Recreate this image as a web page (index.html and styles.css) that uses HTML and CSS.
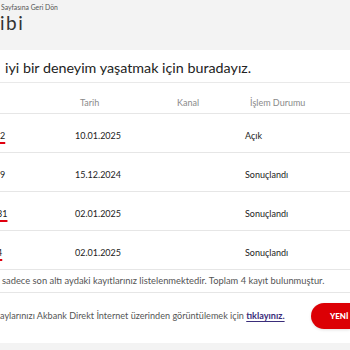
FILE: index.html
```html
<!DOCTYPE html>
<html lang="tr">
<head>
<meta charset="utf-8">
<link rel="stylesheet" href="styles.css">
</head>
<body>
<header class="top">
  <div class="crumb">Sayfasına Geri Dön</div>
  <h1 class="title">ibi</h1>
</header>
<main class="content">
  <p class="subtitle">iyi bir deneyim yaşatmak için buradayız.</p>
  <div class="table">
    <div class="row head">
      <div class="c1"></div>
      <div class="c2">Tarih</div>
      <div class="c3">Kanal</div>
      <div class="c4">İşlem Durumu</div>
    </div>
    <div class="row">
      <div class="c1"><a class="num link">2</a></div>
      <div class="c2">10.01.2025</div>
      <div class="c3"></div>
      <div class="c4">Açık</div>
    </div>
    <div class="row">
      <div class="c1"><span class="num">9</span></div>
      <div class="c2">15.12.2024</div>
      <div class="c3"></div>
      <div class="c4">Sonuçlandı</div>
    </div>
    <div class="row">
      <div class="c1"><a class="num link shift">31</a></div>
      <div class="c2">02.01.2025</div>
      <div class="c3"></div>
      <div class="c4">Sonuçlandı</div>
    </div>
    <div class="row">
      <div class="c1"><a class="num link shift2">4</a></div>
      <div class="c2">02.01.2025</div>
      <div class="c3"></div>
      <div class="c4">Sonuçlandı</div>
    </div>
  </div>
  <p class="note">sadece son altı aydaki kayıtlarınız listelenmektedir. Toplam 4 kayıt bulunmuştur.</p>
  <div class="bottom">
    <p class="more">aylarınızı Akbank Direkt İnternet üzerinden görüntülemek için <a class="click">tıklayınız.</a></p>
    <button class="new">YENİ</button>
  </div>
</main>
<footer class="foot"></footer>
</body>
</html>
```
FILE: styles.css
```css
html, body {
  margin: 0;
  padding: 0;
  overflow: hidden;
  width: 350px;
  height: 350px;
  background: #fff;
  font-family: Lato, "Noto Sans", sans-serif;
  color: #222;
}

.top {
  background: #f3f3f3;
  height: 50px;
  box-sizing: border-box;
  padding-top: 3px;
}

.crumb {
  padding-left: 1px;
  white-space: nowrap;
  font-size: 6.8px;
  line-height: 9px;
  color: #555;
}

.title {
  margin: 0;
  white-space: nowrap;
  font-size: 19px;
  font-weight: 400;
  letter-spacing: 1.5px;
  line-height: 21px;
  color: #333;
}

.subtitle {
  margin: 8px 0 0;
  padding-left: 5px;
  white-space: nowrap;
  font-size: 14.3px;
  line-height: 20px;
  padding-bottom: 4px;
  color: #222;
}

.table {
  border-top: 1px solid #e9e9e9;
}

.row {
  display: grid;
  grid-template-columns: 70px 100px 70px 1fr;
  border-bottom: 1px solid #e6e6e6;
  height: 39px;
  box-sizing: border-box;
  padding-top: 16px;
  font-size: 9px;
  line-height: 12px;
  white-space: nowrap;
  color: #222;
}

.row.head {
  height: 31px;
  padding-top: 14px;
  color: #8a8a8a;
}

.row .c2 { padding-left: 5px; }
.row .c4 { padding-left: 5px; }
.row.head .c2 { padding-left: 10px; }
.row.head .c3 { padding-left: 7px; }
.row.head .c4 { padding-left: 10px; }

.row .c1 {
  overflow: hidden;
}

.num {
  color: #222;
  display: inline-block;
}

.link {
  text-decoration: underline;
  text-decoration-color: #e0000f;
  text-decoration-thickness: 2px;
  text-underline-offset: 3px;
}

.shift {
  margin-left: -3px;
}

.shift2 {
  margin-left: -3px;
}

.note {
  margin: 0;
  height: 23px;
  box-sizing: border-box;
  padding-top: 5px;
  padding-left: 2px;
  white-space: nowrap;
  font-size: 9.35px;
  line-height: 12px;
  color: #555;
  border-bottom: 1px solid #e6e6e6;
}

.bottom {
  display: flex;
  align-items: center;
  height: 50px;
  padding-top: 10px;
  padding-bottom: 14px;
  box-sizing: border-box;
}

.more {
  margin: 0;
  width: 311px;
  flex: none;
  white-space: nowrap;
  font-size: 9.1px;
  line-height: 12px;
  color: #555;
}

.click {
  color: #3a2d7a;
  font-weight: 700;
  text-decoration: underline;
  text-underline-offset: 2px;
}

.new {
  flex: none;
  width: 39px;
  height: 26px;
  border: 0;
  border-radius: 13px 0 0 13px;
  background: #dc0005;
  color: #fff;
  font-family: Lato, sans-serif;
  font-weight: 900;
  font-size: 8px;
  text-align: left;
  padding: 0 0 0 19px;
  box-shadow: 0 1px 3px rgba(0,0,0,0.12);
}

.foot {
  background: #f3f3f3;
  height: 7px;
}
```
